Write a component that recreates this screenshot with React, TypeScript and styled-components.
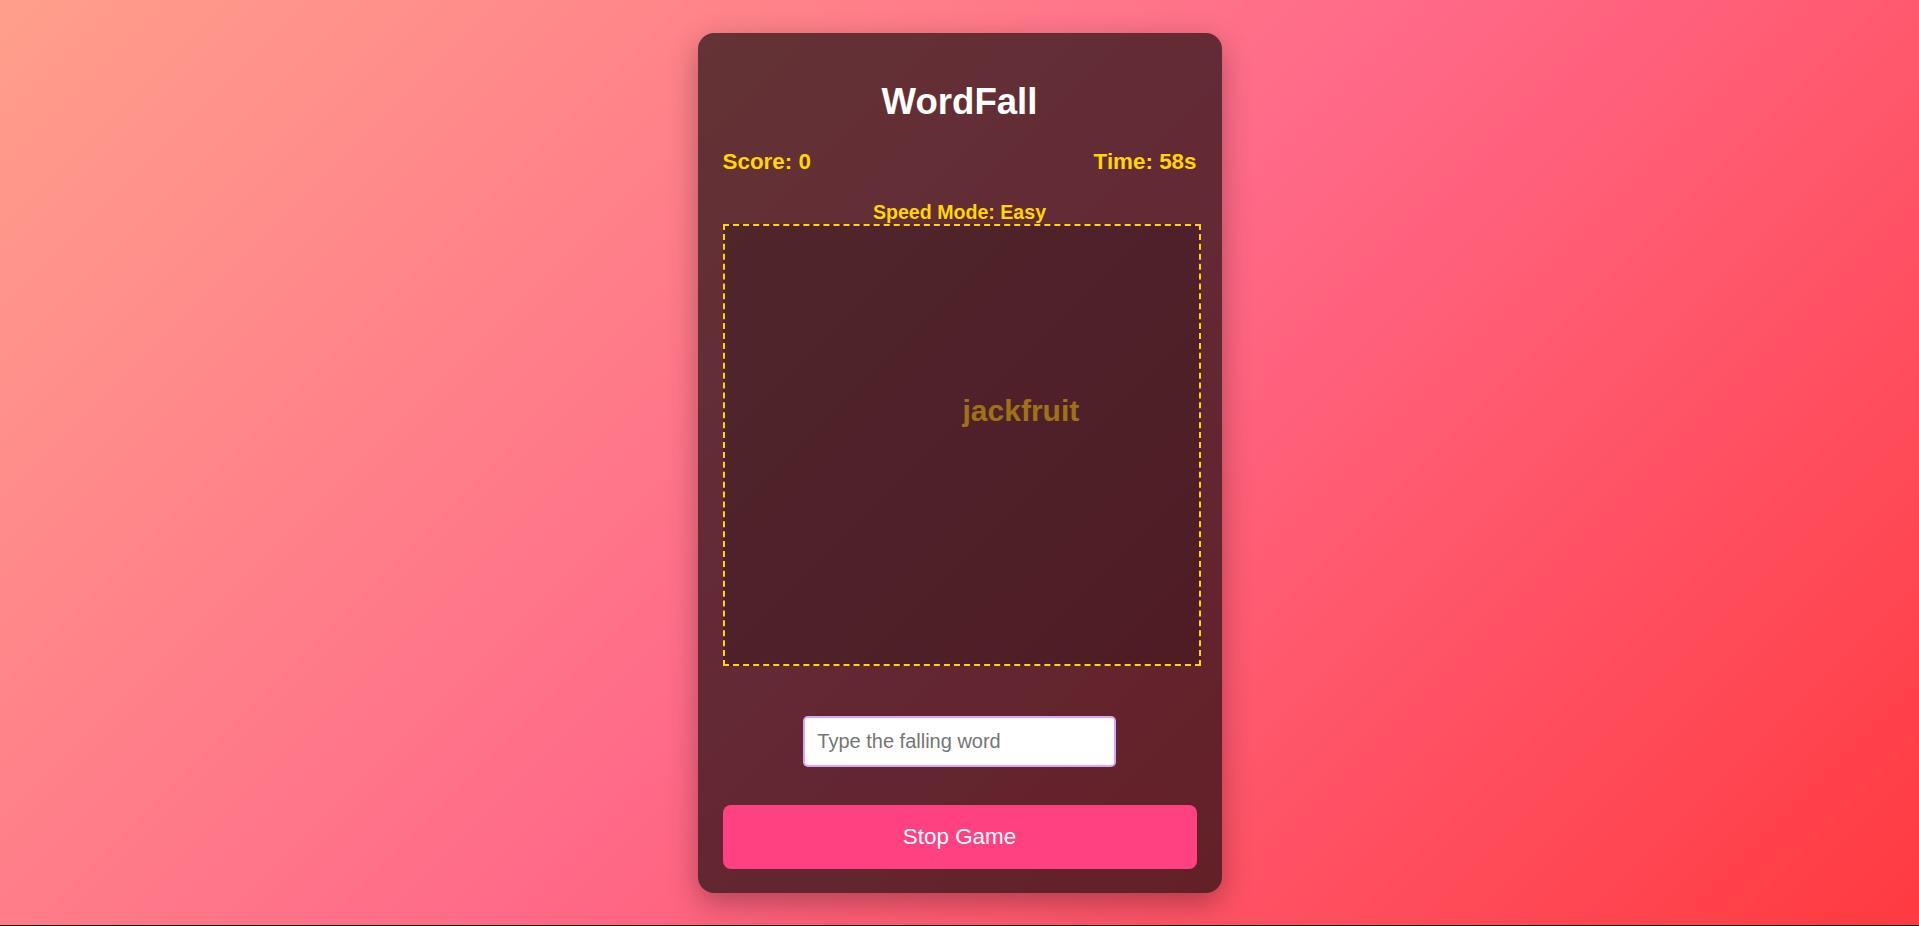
import React, { useState } from 'react';
import styled, { createGlobalStyle } from 'styled-components';

const GlobalStyle = createGlobalStyle`
  html, body {
    margin: 0;
    padding: 0;
    background: #000;
  }
  body {
    font-family: "Liberation Sans", Arial, sans-serif;
  }
`;

const Page = styled.div`
  height: calc(100vh - 1px);
  display: flex;
  align-items: center;
  justify-content: center;
  background: linear-gradient(135deg, #ff9f8b 0%, #ff6a88 50%, #ff3a40 100%);
`;

const Card = styled.div`
  width: 474px;
  padding: 25px 25px 24px;
  border-radius: 16px;
  background: rgba(0, 0, 0, 0.61);
  box-shadow: 0 10px 30px rgba(0, 0, 0, 0.3);
  display: flex;
  flex-direction: column;
`;

const Title = styled.h1`
  margin: 23px 0 26px;
  font-size: 36.6px;
  font-weight: bold;
  line-height: normal;
  color: #fff;
  text-align: center;
`;

const StatsRow = styled.div`
  display: flex;
  justify-content: space-between;
  font-size: 22.4px;
  font-weight: bold;
  color: #ffd700;
`;

const SpeedLabel = styled.div`
  margin-top: 26px;
  text-align: center;
  font-size: 19.6px;
  font-weight: bold;
  color: #ffd700;
`;

const GameArea = styled.div`
  position: relative;
  box-sizing: content-box;
  width: 100%;
  height: 438px;
  border: 2px dashed #ffd700;
  background: rgba(0, 0, 0, 0.2);
  overflow: hidden;
`;

const FallingWord = styled.div`
  position: absolute;
  font-size: 30px;
  font-weight: bold;
  color: #ffd700;
  opacity: 0.45;
  white-space: nowrap;
`;

const InputRow = styled.div`
  margin-top: 50px;
  display: flex;
  justify-content: center;
`;

const WordInput = styled.input`
  box-sizing: content-box;
  width: 60%;
  padding: 12px;
  border: 2px solid #d9a6f5;
  border-radius: 5px;
  background: #fff;
  font-family: "Liberation Sans", Arial, sans-serif;
  font-size: 20px;
  line-height: normal;
  color: #222;
  outline: none;
  &::placeholder {
    color: #757575;
  }
`;

const StopButton = styled.button`
  margin-top: 38px;
  width: 100%;
  padding: 19px;
  border: none;
  border-radius: 8px;
  background: #ff4081;
  color: #fff;
  font-family: "Liberation Sans", Arial, sans-serif;
  font-size: 22.4px;
  line-height: normal;
  cursor: pointer;
`;

export default function App() {
  const [typed, setTyped] = useState('');
  const word = { text: 'jackfruit', x: 238, y: 168 };

  return (
    <>
      <GlobalStyle />
      <Page>
        <Card>
          <Title>WordFall</Title>
          <StatsRow>
            <span>Score: 0</span>
            <span>Time: 58s</span>
          </StatsRow>
          <SpeedLabel>Speed Mode: Easy</SpeedLabel>
          <GameArea>
            <FallingWord style={{ left: word.x, top: word.y }}>{word.text}</FallingWord>
          </GameArea>
          <InputRow>
            <WordInput
              type="text"
              placeholder="Type the falling word"
              value={typed}
              onChange={(e) => setTyped(e.target.value)}
            />
          </InputRow>
          <StopButton>Stop Game</StopButton>
        </Card>
      </Page>
    </>
  );
}
